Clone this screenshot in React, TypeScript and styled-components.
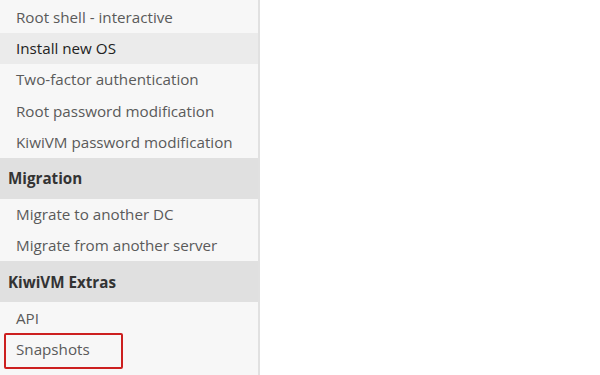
import React from 'react';
import styled, { createGlobalStyle } from 'styled-components';

const GlobalStyle = createGlobalStyle`
  html, body {
    margin: 0;
    padding: 0;
    background: #ffffff;
  }
  body {
    font-family: "Open Sans", "Liberation Sans", sans-serif;
  }
`;

type Entry = {
  label: string,
  kind: 'item' | 'header',
  active?: boolean,
  marked?: boolean,
};

const entries: Entry[] = [
  { label: 'Root shell - interactive', kind: 'item' },
  { label: 'Install new OS', kind: 'item', active: true },
  { label: 'Two-factor authentication', kind: 'item' },
  { label: 'Root password modification', kind: 'item' },
  { label: 'KiwiVM password modification', kind: 'item' },
  { label: 'Migration', kind: 'header' },
  { label: 'Migrate to another DC', kind: 'item' },
  { label: 'Migrate from another server', kind: 'item' },
  { label: 'KiwiVM Extras', kind: 'header' },
  { label: 'API', kind: 'item' },
  { label: 'Snapshots', kind: 'item', marked: true },
];

const Page = styled.div`
  display: flex;
  flex-direction: row;
  width: 600px;
  height: 375px;
  overflow: hidden;
`;

const Sidebar = styled.nav`
  display: flex;
  flex-direction: column;
  box-sizing: border-box;
  width: 260px;
  height: 100%;
  padding-top: 1.25px;
  background-color: #f7f7f7;
  border-right: 2px solid #e1e1e1;
`;

const Item = styled.div<{ $active?: boolean }>`
  position: relative;
  display: flex;
  align-items: center;
  box-sizing: border-box;
  height: 31.25px;
  padding-left: 16px;
  font-size: 15.2px;
  color: ${(p) => (p.$active ? '#222222' : '#5a5a5a')};
  background-color: ${(p) => (p.$active ? '#ebebeb' : 'transparent')};
`;

const Header = styled.div`
  display: flex;
  align-items: center;
  box-sizing: border-box;
  height: 41px;
  padding-left: 8px;
  font-size: 15.2px;
  font-weight: 700;
  color: #333333;
  background-color: #e0e0e0;
`;

const Marker = styled.span`
  position: absolute;
  left: 4px;
  top: 0;
  width: 119px;
  height: 36px;
  box-sizing: border-box;
  border: 2px solid #cc1f1f;
  border-radius: 2px;
`;

const Content = styled.main`
  flex: 1;
  background-color: #ffffff;
`;

function App() {
  return (
    <>
      <GlobalStyle />
      <Page>
        <Sidebar>
          {entries.map((e) => (e.kind === 'header' ? (
            <Header key={e.label}>{e.label}</Header>
          ) : (
            <Item key={e.label} $active={e.active}>
              {e.label}
              {e.marked && <Marker />}
            </Item>
          )))}
        </Sidebar>
        <Content />
      </Page>
    </>
  );
}

export default App;
